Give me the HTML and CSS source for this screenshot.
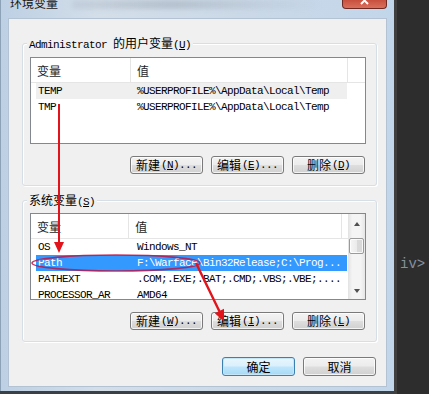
FILE: index.html
```html
<!DOCTYPE html>
<html lang="zh-CN">
<head>
<meta charset="utf-8">
<title>环境变量</title>
<link rel="stylesheet" href="styles.css">
</head>
<body>
<div class="screen">
  <div class="window">
    <div class="titlebar">
      <span class="title">环境变量</span>
      <span class="glass"></span>
      <span class="close">
        <svg width="43" height="8" viewBox="0 0 43 8"><path d="M18 -3 L25 4 M25 -3 L18 4" stroke="#fff" stroke-width="2" fill="none"/></svg>
      </span>
    </div>
    <div class="panel">
      <div class="group">
        <div class="legend"><span class="mono">Administrator </span>的用户变量<span class="mono">(<u>U</u>)</span></div>
        <div class="list">
          <div class="list-main">
            <div class="header"><span class="hc c1">变量</span><span class="hc c2">值</span><span class="hc fill"></span></div>
            <div class="row inactive"><span class="c1">TEMP</span><span class="c2">%USERPROFILE%\AppData\Local\Temp</span></div>
            <div class="row"><span class="c1">TMP</span><span class="c2">%USERPROFILE%\AppData\Local\Temp</span></div>
          </div>
        </div>
        <div class="btns">
          <span class="btn">新建<span class="mono">(<u>N</u>)...</span></span>
          <span class="btn">编辑<span class="mono">(<u>E</u>)...</span></span>
          <span class="btn">删除<span class="mono">(<u>D</u>)</span></span>
        </div>
      </div>
      <div class="group second">
        <div class="legend">系统变量<span class="mono">(<u>S</u>)</span></div>
        <div class="list">
          <div class="list-main">
            <div class="header"><span class="hc c1">变量</span><span class="hc c2">值</span><span class="hc fill"></span></div>
            <div class="row"><span class="c1">OS</span><span class="c2">Windows_NT</span></div>
            <div class="row sel"><span class="c1">Path</span><span class="c2">F:\Warface\Bin32Release;C:\Prog...</span></div>
            <div class="row"><span class="c1">PATHEXT</span><span class="c2">.COM;.EXE;.BAT;.CMD;.VBS;.VBE;....</span></div>
            <div class="row"><span class="c1">PROCESSOR_AR</span><span class="c2">AMD64</span></div>
          </div>
          <div class="vscroll">
            <div class="sb-btn"><span class="arrow up"></span></div>
            <div class="sb-track"><div class="thumb"></div></div>
            <div class="sb-btn"><span class="arrow down"></span></div>
          </div>
        </div>
        <div class="btns">
          <span class="btn">新建<span class="mono">(<u>W</u>)...</span></span>
          <span class="btn">编辑<span class="mono">(<u>I</u>)...</span></span>
          <span class="btn">删除<span class="mono">(<u>L</u>)</span></span>
        </div>
      </div>
      <div class="dlg-btns">
        <span class="btn big default">确定</span>
        <span class="btn big">取消</span>
      </div>
    </div>
  </div>
  <div class="side"><span class="code">iv&gt;</span></div>
</div>
<svg class="marks" width="429" height="394" viewBox="0 0 429 394">
  <line x1="59" y1="104" x2="59" y2="244" stroke="#e2141b" stroke-width="2"/>
  <polygon points="54,242 64,242 59,253" fill="#e2141b"/>
  <ellipse cx="116" cy="263" rx="84" ry="8" fill="none" stroke="#b8184a" stroke-opacity="0.85" stroke-width="1.6"/>
  <line x1="196" y1="263" x2="219.5" y2="311.5" stroke="#e2141b" stroke-width="2.4"/>
  <polygon points="224,308.8 214.8,313.3 224,321.5" fill="#e2141b"/>
</svg>
</body>
</html>
```
FILE: styles.css
```css
* { box-sizing: border-box; }
html, body { margin: 0; padding: 0; }
body {
  width: 429px;
  height: 394px;
  overflow: hidden;
  position: relative;
  background: #2c2c2c;
  font-family: "Noto Sans CJK SC", sans-serif;
  font-size: 12px;
  color: #000;
}
.screen { display: flex; height: 394px; }
.window {
  width: 394px;
  height: 394px;
  flex: none;
  display: flex;
  flex-direction: column;
  padding: 0 7px 0 8px;
  background: linear-gradient(90deg, #bdd0e4 0%, #d3dee9 25%, #cbd9e7 60%, #c2d6eb 100%);
  border-bottom: 3px solid #3b4047;
  box-shadow: inset 1px 0 0 #8da2b7;
}
.titlebar {
  height: 18px;
  flex: none;
  display: flex;
  align-items: flex-start;
  overflow: hidden;
}
.title {
  margin-top: -5px;
  margin-left: 2px;
  line-height: 16px;
  color: #151515;
}
.glass {
  flex: 1;
  height: 9px;
  margin: 0 20px 0 14px;
  background: linear-gradient(90deg, rgba(150,160,175,0.18), rgba(120,130,145,0.28) 40%, rgba(150,160,175,0.12) 80%, rgba(255,255,255,0));
  filter: blur(2px);
}
.close {
  width: 45px;
  height: 9px;
  flex: none;
  display: flex;
  background: linear-gradient(#c84f3e, #d9705c);
  border: 1px solid #6e2a22;
  border-top: none;
  border-radius: 0 0 4px 4px;
}
.panel {
  height: 369px;
  flex: none;
  background: #f0f0f0;
  border: 1px solid #b3c3d3;
  padding: 24px 9px 0 13px;
  display: flex;
  flex-direction: column;
}
.group {
  border: 1px solid #d5dfe5;
  border-radius: 3px;
  box-shadow: inset 1px 1px 0 #fff, 1px 1px 0 #fff;
  padding: 0 10px 11px 7px;
  display: flex;
  flex-direction: column;
}
.group.second { margin-top: 14px; }
.legend {
  align-self: flex-start;
  margin-top: -8px;
  margin-left: -3px;
  height: 14px;
  line-height: 14px;
  padding: 0 2px;
  background: #f0f0f0;
  white-space: nowrap;
}
.mono {
  font-family: "Liberation Mono", monospace;
  font-size: 11px;
  letter-spacing: -0.6px;
}
.list {
  margin-top: 7px;
  width: 336px;
  height: 87px;
  flex: none;
  border: 1px solid #828790;
  background: #fff;
  display: flex;
  overflow: hidden;
}
.group.second .list { margin-top: 6px; }
.list-main {
  flex: 1;
  min-width: 0;
  display: flex;
  flex-direction: column;
}
.header {
  height: 25px;
  flex: none;
  display: flex;
  border-bottom: 1px solid #e5e5e5;
  background: #fff;
}
.hc {
  height: 24px;
  padding: 2px 0 0 6px;
  line-height: 22px;
  border-right: 1px solid #e5e5e5;
  color: #1e1e1e;
}
.hc.c1 { width: 100px; }
.hc.c2 { width: 217px; }
.hc.fill { flex: 1; border-right: none; }
.row {
  display: flex;
  flex: none;
  margin-left: 5px;
  width: 311px;
  height: 16px;
  line-height: 16px;
  font-family: "Liberation Mono", monospace;
  font-size: 11px;
  letter-spacing: -0.6px;
  white-space: nowrap;
  color: #000;
}
.row .c1 { width: 99px; padding-left: 2px; overflow: hidden; }
.row .c2 { width: 212px; padding-left: 2px; overflow: hidden; }
.row.inactive { background: #efefef; }
.row.sel { background: #3399ff; color: #fff; }
.vscroll {
  width: 17px;
  flex: none;
  display: flex;
  flex-direction: column;
  background: linear-gradient(90deg, #e2e2e2, #f4f4f4 25%, #f4f4f4 75%, #e6e6e6);
}
.sb-btn {
  height: 17px;
  flex: none;
  display: flex;
  align-items: center;
  justify-content: center;
}
.arrow { width: 0; height: 0; border-left: 3.5px solid transparent; border-right: 3.5px solid transparent; }
.arrow.up { border-bottom: 4px solid #505050; margin-top: 3px; }
.arrow.down { border-top: 4px solid #505050; }
.sb-track { flex: 1; padding-top: 7px; }
.thumb {
  height: 16px;
  margin: 0 1px;
  border: 1px solid #9a9a9a;
  border-radius: 2px;
  background: linear-gradient(90deg, #f5f5f5, #ebebeb 50%, #dadada 50%, #d8d8d8);
  box-shadow: inset 0 0 0 1px rgba(255, 255, 255, 0.8);
}
.btns {
  display: flex;
  justify-content: flex-end;
  gap: 8px;
  margin-top: 12px;
  margin-right: 1px;
}
.btn {
  width: 73px;
  height: 18px;
  flex: none;
  display: flex;
  align-items: center;
  justify-content: center;
  line-height: 16px;
  border: 1px solid #7a7a7a;
  border-radius: 3px;
  background: linear-gradient(#f3f3f3, #ececec 48%, #dedede 52%, #d0d0d0);
  box-shadow: inset 0 0 0 1px rgba(255, 255, 255, 0.75);
  color: #000;
  white-space: nowrap;
}
.btn .mono { margin-left: 1px; }
.dlg-btns {
  display: flex;
  justify-content: flex-end;
  gap: 8px;
  margin-top: 15px;
  margin-right: 1px;
}
.btn.big { height: 19px; }
.btn.default {
  border-color: #3c7fb1;
  background: linear-gradient(#eaf6fd, #d9f0fc 48%, #bee6fd 52%, #a7d9f5);
  box-shadow: inset 0 0 0 1px #c5e6f9;
}
.side {
  flex: 1;
  background: #2d2d2d;
  border-left: 3px solid #3f3f3f;
  padding: 254px 0 0 3px;
}
.code {
  font-family: "Liberation Mono", monospace;
  font-size: 14px;
  line-height: 16px;
  color: #8391a0;
}
.marks {
  position: absolute;
  left: 0;
  top: 0;
  pointer-events: none;
}
```
